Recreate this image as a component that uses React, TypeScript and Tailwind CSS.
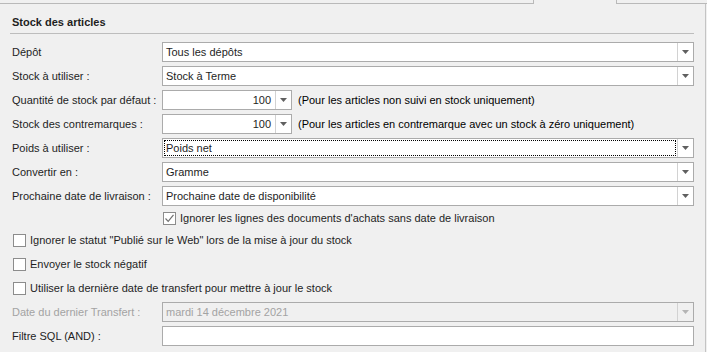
import type { ReactNode } from 'react'

const font = "font-['Segoe_UI','Liberation_Sans',Arial,sans-serif] text-[11px] leading-none"

function Arrow({ disabled = false }: { disabled?: boolean }) {
  return (
    <svg width="7" height="4" viewBox="0 0 7 4">
      <path d="M0 0h7L3.5 4z" fill={disabled ? '#b4b4b4' : '#606060'} />
    </svg>
  )
}

type ComboProps = {
  value: string
  focus?: boolean
  disabled?: boolean
  align?: 'left' | 'right'
  className?: string
}

function Combo({ value, focus = false, disabled = false, align = 'left', className = 'flex-1' }: ComboProps) {
  return (
    <div
      className={`flex h-[20px] border border-[#ababab] ${disabled ? 'bg-[#f0f0f0]' : 'bg-white'} ${className}`}
    >
      <div
        className={`relative flex flex-1 items-center ${align === 'right' ? 'justify-end pr-[4px]' : 'pl-[3px]'} ${
          disabled ? 'text-[#a3a3a3]' : 'text-[#1e1e1e]'
        }`}
      >
        {focus && <span className="absolute inset-[1px] border border-dotted border-black" />}
        {value}
      </div>
      <div className="flex w-[16px] items-center justify-center border-l border-[#d2d2d2]">
        <Arrow disabled={disabled} />
      </div>
    </div>
  )
}

function Row({ label, children, muted = false }: { label: string; children: ReactNode; muted?: boolean }) {
  return (
    <div className="flex h-[24px] items-center">
      <div className={`w-[150px] shrink-0 ${muted ? 'text-[#a3a3a3]' : 'text-[#1e1e1e]'}`}>{label}</div>
      {children}
    </div>
  )
}

function Check({ checked = false }: { checked?: boolean }) {
  return (
    <span className="flex h-[13px] w-[13px] shrink-0 items-center justify-center border border-[#8c8c8c] bg-white">
      {checked && (
        <svg width="11" height="11" viewBox="0 0 11 11">
          <path d="M1.5 5.5 4.2 8.3 9.5 1.8" fill="none" stroke="#707070" strokeWidth="1.2" />
        </svg>
      )}
    </span>
  )
}

function CheckRow({ label, checked = false }: { label: string; checked?: boolean }) {
  return (
    <div className="flex h-[24px] items-center gap-[4px] pl-[1px] text-[#1e1e1e]">
      <Check checked={checked} />
      <span>{label}</span>
    </div>
  )
}

export default function App() {
  return (
    <div className={`h-[352px] w-[707px] overflow-hidden bg-[#f0f0f0] ${font}`}>
      <div className="flex h-[4px]">
        <div className="w-[534px] border-r border-b border-[#b9b9b9]" />
        <div className="w-[82px]" />
        <div className="flex-1 border-b border-l border-[#b9b9b9]" />
      </div>

      <div className="flex h-[348px]">
        <div className="w-[705px] pr-[11px] pl-[12px]">
          <div className="-ml-[2px] flex h-[30px] items-end border-b border-[#bdbdbd] pb-[5px] pl-[2px] font-bold text-[#1e1e1e]">
            Stock des articles
          </div>

          <div className="mt-[6px]">
            <Row label="Dépôt">
              <Combo value="Tous les dépôts" />
            </Row>
            <Row label="Stock à utiliser :">
              <Combo value="Stock à Terme" />
            </Row>
            <Row label="Quantité de stock par défaut :">
              <Combo value="100" align="right" className="w-[130px]" />
              <span className="ml-[6px]">(Pour les articles non suivi en stock uniquement)</span>
            </Row>
            <Row label="Stock des contremarques :">
              <Combo value="100" align="right" className="w-[130px]" />
              <span className="ml-[6px]">(Pour les articles en contremarque avec un stock à zéro uniquement)</span>
            </Row>
            <Row label="Poids à utiliser :">
              <Combo value="Poids net" focus />
            </Row>
            <Row label="Convertir en :">
              <Combo value="Gramme" />
            </Row>
            <Row label="Prochaine date de livraison :">
              <Combo value="Prochaine date de disponibilité" />
            </Row>

            <div className="flex h-[20px] items-center">
              <div className="w-[150px] shrink-0" />
              <CheckRow label="Ignorer les lignes des documents d'achats sans date de livraison" checked />
            </div>

            <CheckRow label={'Ignorer le statut "Publié sur le Web" lors de la mise à jour du stock'} />
            <CheckRow label="Envoyer le stock négatif" />
            <CheckRow label="Utiliser la dernière date de transfert pour mettre à jour le stock" />

            <Row label="Date du dernier Transfert :" muted>
              <Combo value="mardi 14 décembre 2021" disabled />
            </Row>
            <Row label="Filtre SQL (AND) :">
              <div className="h-[20px] flex-1 border border-[#ababab] bg-white" />
            </Row>
          </div>
        </div>
        <div className="w-px bg-[#c4c4c4]" />
      </div>
    </div>
  )
}
